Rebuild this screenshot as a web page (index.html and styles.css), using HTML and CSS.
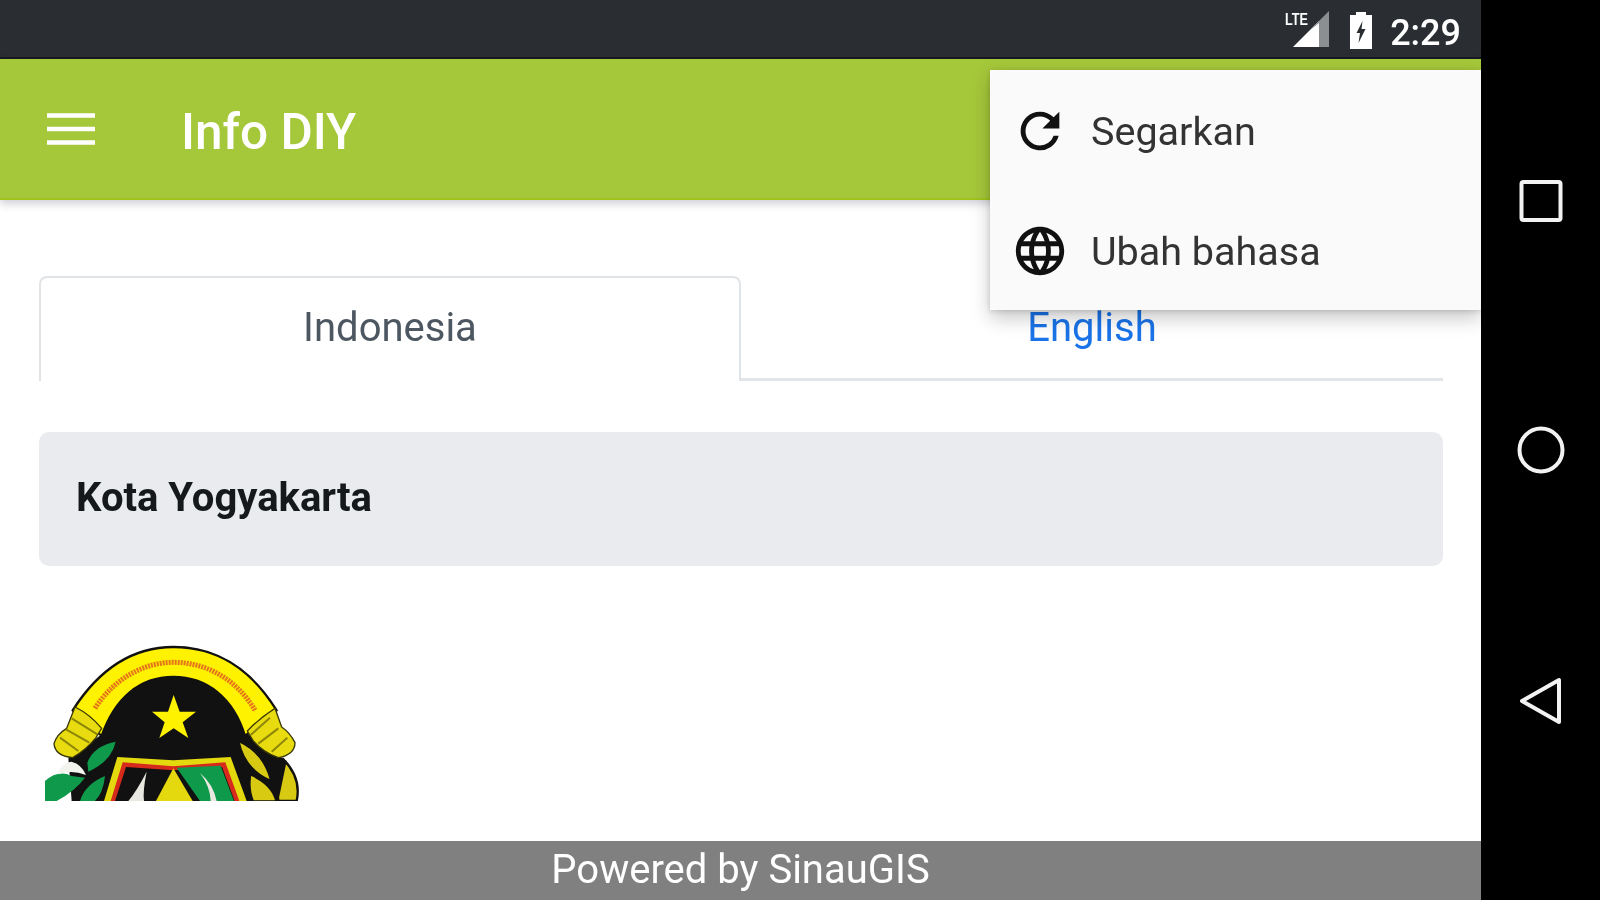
FILE: index.html
```html
<!DOCTYPE html>
<html lang="id">
<head>
<meta charset="utf-8">
<title>Info DIY</title>
<link rel="stylesheet" href="styles.css">
</head>
<body>
<div class="device">
  <div class="screen">
    <div class="statusbar">
      <svg class="ic-signal" viewBox="0 0 48 44" width="48" height="44">
        <path d="M8 36 L34 10 V36 Z" fill="#fff"/>
        <path d="M24 20 L44 0 V36 H34 V12 Z" fill="#8c8f92"/>
        <text x="0" y="14" class="lte" textLength="23" lengthAdjust="spacingAndGlyphs">LTE</text>
      </svg>
      <svg class="ic-batt" viewBox="0 0 24 38" width="24" height="38">
        <path d="M7 0 H17 V3 H23 V37 H1 V3 H7 Z" fill="#fff"/>
        <path d="M13.500 9 L7.500 21 H11 L9.500 31 L16.500 17 H12.500 Z" fill="#2a2e32"/>
      </svg>
      <span class="clock">2:29</span>
    </div>
    <header class="appbar">
      <svg class="ic-menu" viewBox="0 0 48 34" width="48" height="34">
        <path d="M0 3.500 H48 M0 17 H48 M0 30.500 H48" stroke="#fff" stroke-width="4.500"/>
      </svg>
      <h1 class="title">Info DIY</h1>
    </header>
    <main class="content">
      <nav class="tabs">
        <a class="tab tab-active">Indonesia</a>
        <a class="tab tab-link">English</a>
      </nav>
      <section class="jumbo"><h2 class="jumbo-title">Kota Yogyakarta</h2></section>
      <svg class="emblem" viewBox="120 60 792 480" width="264" height="160">
        <path d="M850 415 Q905 470 890 540 H835 Q825 470 850 415 Z" fill="#d8c912" stroke="#111" stroke-width="7"/>
        <path d="M215 540 L205 410 L320 330 L730 330 L860 420 L835 540 Z" fill="#111"/>
        <!-- arch -->
        <path d="M218 268 C300 140 400 78 520 78 C650 78 750 140 830 268 L735 345 C700 230 620 168 520 168 C420 168 345 230 305 345 Z" fill="#fff200" stroke="#111" stroke-width="7" stroke-linejoin="round"/>
        <path d="M305 345 C345 230 420 168 520 168 C620 168 700 230 735 345 V420 H305 Z" fill="#111"/>
        <!-- script on ribbon -->
        <path d="M285 262 C340 175 430 124 520 124 C620 124 710 175 765 268" fill="none" stroke="#e5761a" stroke-width="15" stroke-dasharray="6 3"/>
        <!-- scrolls -->
        <g fill="#e8dc10" stroke="#3a3806" stroke-width="4" stroke-linejoin="round">
          <path d="M225 258 Q270 280 305 322 L288 350 Q260 385 218 410 Q165 405 162 368 Q170 340 200 322 Z"/>
          <path d="M825 262 Q780 290 742 330 L760 360 Q790 395 835 410 Q885 400 885 365 Q870 335 845 318 Z"/>
        </g>
        <g fill="none" stroke="#8d8608" stroke-width="6">
          <path d="M215 292 L292 340 M198 325 L268 365 M180 350 L235 390"/>
          <path d="M810 290 L752 342 M835 322 L775 368 M862 350 L815 392"/>
        </g>
        <!-- star -->
        <path d="M521 222 L539 272 L588 272 L548 304 L565 351 L521 322 L478 351 L494 304 L456 272 L504 272 Z" fill="#fff200"/>
        <!-- green leaves, cotton -->
        <path d="M262 425 Q280 375 347 362 Q335 420 265 452 Z" fill="#0e9a4a"/>
        <path d="M135 480 Q175 445 215 465 L255 470 Q225 510 170 540 H135 Z" fill="#0e9a4a"/>
        <path d="M240 540 Q255 490 315 465 Q310 515 285 540 Z" fill="#0e9a4a"/>
        <path d="M175 450 Q190 425 215 422 Q245 430 258 462 Q215 445 175 460 Z" fill="#f4f4ee"/>
        <!-- yellow leaves right -->
        <path d="M717 362 Q790 395 812 478 Q735 445 717 362 Z" fill="#d8c912" stroke="#111" stroke-width="4"/>
        <path d="M752 462 Q815 490 828 540 H760 Q745 505 752 462 Z" fill="#d8c912" stroke="#111" stroke-width="4"/>
        <!-- shield -->
        <path d="M352 408 L520 418 L692 408 L740 540 H312 Z" fill="#e4d80e"/>
        <path d="M368 424 L520 436 L676 424 L718 540 H332 Z" fill="#d62a1c"/>
        <path d="M378 438 L520 448 L666 438 L704 540 H345 Z" fill="#111"/>
        <path d="M530 440 L662 434 L702 540 H600 Z" fill="#0e9a4a"/>
        <path d="M520 442 L578 540 H468 Z" fill="#e4d80e"/>
        <path d="M385 540 Q410 510 440 452 Q428 510 432 540 Z" fill="#e8e8e0"/>
        <path d="M600 456 Q640 490 650 540 H632 Q630 495 600 456 Z" fill="#e8e8e0"/>
      </svg>
    </main>
    <footer class="footer">Powered by SinauGIS</footer>
    <div class="menu">
      <div class="menu-item">
        <svg class="menu-icon" viewBox="0 0 24 24" width="58" height="58"><path d="M17.650 6.350A7.958 7.958 0 0 0 12 4a8 8 0 1 0 7.730 10h-2.080A5.990 5.990 0 0 1 12 18a6 6 0 1 1 0-12c1.660 0 3.140.69 4.220 1.780L13 11h7V4l-2.350 2.350z"/></svg>
        <span>Segarkan</span>
      </div>
      <div class="menu-item">
        <svg class="menu-icon" viewBox="0 0 24 24" width="58" height="58"><path d="M11.990 2C6.470 2 2 6.480 2 12s4.470 10 9.990 10C17.520 22 22 17.520 22 12S17.520 2 11.990 2zm6.930 6h-2.950a15.650 15.650 0 0 0-1.380-3.560A8.030 8.030 0 0 1 18.920 8zM12 4.040c.83 1.200 1.480 2.530 1.910 3.960h-3.820c.43-1.430 1.080-2.760 1.910-3.960zM4.260 14C4.100 13.360 4 12.690 4 12s.1-1.360.26-2h3.380c-.08.660-.14 1.320-.14 2 0 .68.060 1.340.14 2H4.260zm.82 2h2.950c.32 1.250.78 2.450 1.380 3.560A7.987 7.987 0 0 1 5.080 16zm2.950-8H5.080a7.987 7.987 0 0 1 4.330-3.560A15.650 15.650 0 0 0 8.030 8zM12 19.960c-.83-1.200-1.480-2.530-1.910-3.960h3.820c-.43 1.430-1.080 2.760-1.910 3.960zM14.340 14H9.660c-.09-.660-.16-1.320-.16-2 0-.68.070-1.350.16-2h4.680c.09.650.16 1.320.16 2 0 .68-.070 1.340-.16 2zm.25 5.560c.6-1.110 1.060-2.310 1.380-3.560h2.950a8.030 8.030 0 0 1-4.330 3.560zM16.360 14c.08-.660.14-1.320.14-2 0-.68-.060-1.340-.14-2h3.380c.16.640.26 1.310.26 2s-.1 1.360-.26 2h-3.380z"/></svg>
        <span>Ubah bahasa</span>
      </div>
    </div>
  </div>
  <aside class="navbar">
    <svg viewBox="0 0 44 44" width="44" height="44"><rect x="2.500" y="3" width="39" height="38" rx="2" fill="none" stroke="#f2f2f2" stroke-width="4"/></svg>
    <svg viewBox="0 0 48 48" width="48" height="48"><circle cx="24" cy="24" r="21.500" fill="none" stroke="#f2f2f2" stroke-width="4"/></svg>
    <svg viewBox="0 0 44 48" width="44" height="48"><path d="M3 24 L40 3 V45 Z" fill="none" stroke="#f2f2f2" stroke-width="4" stroke-linejoin="round"/></svg>
  </aside>
</div>
</body>
</html>
```
FILE: styles.css
```css
html, body { margin: 0; padding: 0; height: 100%; background: #000; overflow: hidden; }
body { font-family: Roboto, "Liberation Sans", sans-serif; }
.device { display: flex; width: 1600px; height: 900px; filter: blur(.7px); }
.screen { position: relative; width: 1481px; display: flex; flex-direction: column; background: #fff; overflow: hidden; }
.statusbar { height: 59px; background: #2a2e32; border-bottom: 2px solid #14181f; display: flex; align-items: center; justify-content: flex-end; padding-right: 20px; flex: none; box-sizing: border-box; }
.ic-signal { margin-right: 16px; margin-top: 9px; }
.lte { font: 700 17px "Liberation Sans", sans-serif; fill: #fff; }
.ic-batt { margin-right: 17px; margin-top: 4px; }
.clock { color: #fff; font-size: 36px; font-weight: 500; line-height: 1; margin-top: 8px; }
.appbar { height: 141px; flex: none; background: #a5c73a; border-bottom: 2px solid #a0c41a; box-shadow: 0 3px 9px rgba(60,60,90,.28); display: flex; align-items: center; padding-left: 47px; box-sizing: border-box; position: relative; z-index: 1; }
.ic-menu { margin-top: 0; }
.title { margin: 9px 0 0 86px; color: #fff; font-size: 49.500px; font-weight: 500; line-height: 1; }
.content { flex: 1; padding: 76px 38px 0 39px; display: flex; flex-direction: column; min-height: 0; }
.tabs { display: flex; height: 105px; border-bottom: 3px solid #e3e6e8; box-sizing: border-box; flex: none; }
.tab { width: 702px; height: 105px; flex: none; box-sizing: border-box; display: flex; align-items: center; justify-content: center; font-size: 40px; padding-bottom: 4px; }
.tab-active { color: #4d5761; background: #fff; border: 2px solid #e1e4e7; border-bottom: 0; border-radius: 8px 8px 0 0; }
.tab-link { color: #1a73e8; padding-bottom: 3px; padding-top: 1px; }
.jumbo { margin-top: 51px; height: 134px; background: #e9ebee; border-radius: 10px; display: flex; align-items: center; padding-left: 37px; flex: none; }
.jumbo-title { margin: -4px 0 0; font-size: 40px; font-weight: 700; color: #16191c; }
.emblem { display: block; margin: 75px 0 0 1px; flex: none; }
.footer { height: 59px; flex: none; background: #808080; color: #fff; text-align: center; font-size: 40px; line-height: 58px; }
.menu { position: absolute; left: 990px; top: 70px; width: 491px; height: 240px; background: #fafafa; box-shadow: 0 8px 18px rgba(0,0,0,.22), 0 1px 5px rgba(0,0,0,.14); z-index: 2; display: flex; flex-direction: column; justify-content: center; }
.menu-item { height: 120px; display: flex; align-items: center; padding-left: 21px; font-size: 39.500px; color: #333; }
.menu-item span { margin-top: 2px; margin-left: -1px; }
.menu-icon { margin-right: 23px; fill: #111; flex: none; margin-top: 1px; }
.navbar { width: 119px; background: #000; position: relative; display: flex; flex-direction: column; align-items: center; gap: 203px; padding-top: 179px; box-sizing: border-box; }
```
